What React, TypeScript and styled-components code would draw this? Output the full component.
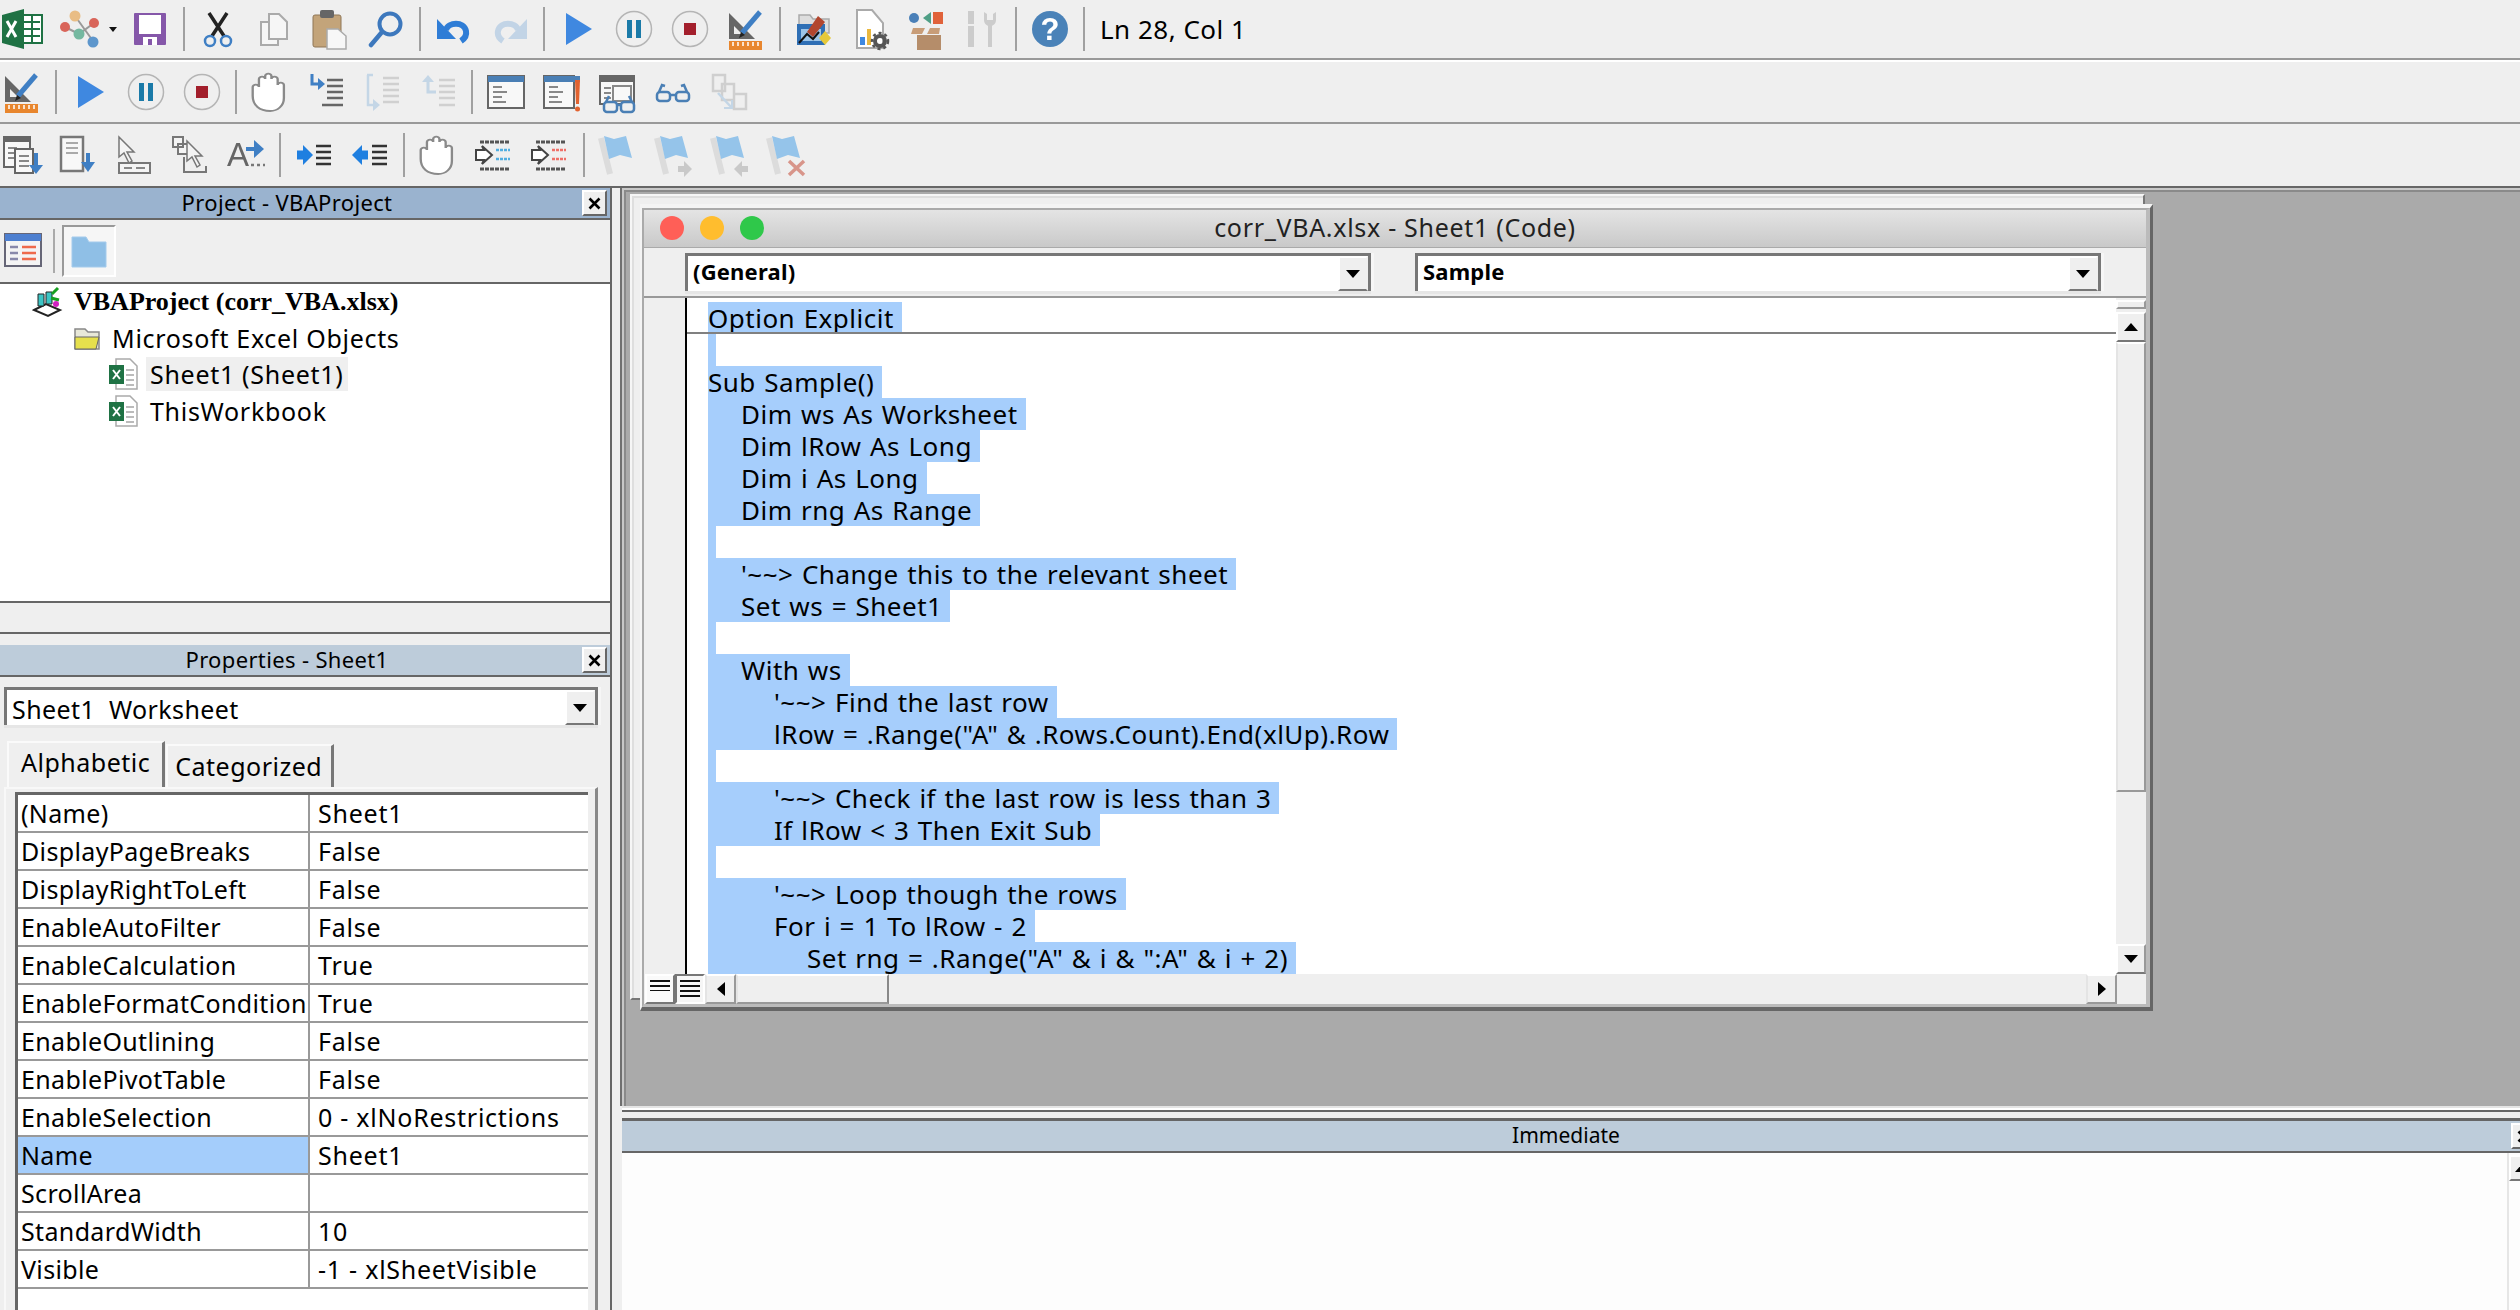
import type { ReactNode } from 'react';
import styled, { createGlobalStyle } from 'styled-components';

const UIFont = '"Noto Sans", "DejaVu Sans", sans-serif';

function FlagShape({ children }: { children?: ReactNode }) {
  return (
    <>
      <path d="M3 3l9 36" stroke="#dcdcdc" strokeWidth="6" />
      <path d="M6 1l10 3 12-3 6 22-12-3-11 4z" fill="#95c4ea" />
      {children}
    </>
  );
}

// all toolbar glyphs are drawn in a 40x40 box
const Glyphs: Record<string, ReactNode> = {
  excel: <>
    <rect x="20" y="6" width="20" height="28" fill="#fff" stroke="#1f7244" strokeWidth="2" />
    <path d="M22 13h16M22 20h16M22 27h16M30 6v28" stroke="#1f7244" strokeWidth="2" />
    <path d="M0 6 22 0v40L0 34z" fill="#1f7244" />
    <path d="M5 12l9 16M14 12 5 28" stroke="#fff" strokeWidth="3" />
  </>,
  multi: <>
    <path d="M15 7 33 32M34 14 19 25 5 18" stroke="#999" strokeWidth="2" fill="none" />
    <circle cx="15" cy="7" r="5.5" fill="#e9bd85" />
    <circle cx="5" cy="18" r="5" fill="#d9655a" />
    <circle cx="34" cy="14" r="5" fill="#d9655a" />
    <circle cx="19" cy="25" r="5.5" fill="#74b8a0" />
    <circle cx="33" cy="33" r="5.5" fill="#5d96cc" />
  </>,
  save: <>
    <rect x="4" y="4" width="32" height="32" rx="1" fill="#8557a9" />
    <rect x="9" y="6" width="22" height="19" fill="#fff" />
    <rect x="13" y="28" width="14" height="8" fill="#fff" />
    <rect x="18" y="30" width="4" height="6" fill="#8557a9" />
  </>,
  cut: <>
    <path d="M11 4 26 27M29 4 14 27" stroke="#222" strokeWidth="3.5" />
    <circle cx="12" cy="32" r="5" fill="none" stroke="#3f7fc4" strokeWidth="2.5" />
    <circle cx="28" cy="32" r="5" fill="none" stroke="#3f7fc4" strokeWidth="2.5" />
  </>,
  copy: <>
    <rect x="7" y="13" width="17" height="23" fill="#f6f6f6" stroke="#aaa" strokeWidth="2" />
    <path d="M15 5h10l8 8v17H15z" fill="#f6f6f6" stroke="#aaa" strokeWidth="2" />
  </>,
  paste: <>
    <rect x="3" y="6" width="28" height="32" rx="2" fill="#c3a47a" stroke="#8f7656" />
    <rect x="10" y="1" width="14" height="8" rx="2" fill="#666" />
    <path d="M17 20h11l8 7v13H17z" fill="#f7f7f7" stroke="#aaa" strokeWidth="1.5" />
  </>,
  find: <>
    <circle cx="24" cy="15" r="10.5" fill="none" stroke="#3d78bd" strokeWidth="4" />
    <path d="M16 23 5 36" stroke="#3d78bd" strokeWidth="4.5" strokeLinecap="round" />
  </>,
  undo: <>
    <path d="M12 21c2-8 18-9 20 1 1 5-2 8-5 10" fill="none" stroke="#2f7dd6" strokeWidth="6" />
    <path d="M3 10v20h19z" fill="#2f7dd6" />
  </>,
  redo: <>
    <path d="M28 21c-2-8-18-9-20 1-1 5 2 8 5 10" fill="none" stroke="#c2d4e6" strokeWidth="6" />
    <path d="M37 10v20H18z" fill="#c2d4e6" />
  </>,
  play: <path d="M8 4 34 20 8 36z" fill="#3f88e0" />,
  pause: <>
    <circle cx="20" cy="20" r="17.5" fill="none" stroke="#b5b5b5" strokeWidth="1.5" />
    <path d="M13 11h5v18h-5zM22 11h5v18h-5z" fill="#1a7aa8" />
  </>,
  stop: <>
    <circle cx="20" cy="20" r="17.5" fill="none" stroke="#b5b5b5" strokeWidth="1.5" />
    <rect x="14" y="14" width="12" height="12" fill="#a31f2c" />
  </>,
  design: <>
    <path d="M3 4v26h26z" fill="#666" />
    <path d="M8 17v8h8z" fill="#efefef" />
    <path d="M34 3 16 24" stroke="#3f7fc4" strokeWidth="5" />
    <path d="M13 29l2-6 4 3z" fill="#222" />
    <rect x="3" y="32" width="33" height="9" fill="#e8862e" />
    <path d="M7 33v4M12 33v4M17 33v4M22 33v4M27 33v4M32 33v4" stroke="#fff" strokeWidth="1.5" />
  </>,
  project: <>
    <path d="M5 6h11l3 4h16v14H5z" fill="#ddd" stroke="#aaa" strokeWidth="1.5" />
    <rect x="3" y="15" width="28" height="21" fill="#2f6fb5" />
    <path d="M7 20h20v12H7z" fill="#9cc4e8" />
    <path d="M24 7l7 6-12 15-6-5z" fill="#b2462e" />
    <path d="M31 22l6 7-6 7-6-7z" fill="#e6c93a" />
    <path d="M5 34l8-9 6 5 6-7" stroke="#111" strokeWidth="2" fill="none" />
  </>,
  properties: <>
    <path d="M7 1h15l11 13v25H7z" fill="#fff" stroke="#aaa" strokeWidth="2" />
    <path d="M10 28h5v8h-5z" fill="#3f88e0" />
    <path d="M17 20h4v16h-4z" fill="#e9b840" />
    <circle cx="30" cy="32" r="5" fill="none" stroke="#555" strokeWidth="4" />
    <circle cx="30" cy="32" r="8" fill="none" stroke="#555" strokeWidth="2.5" strokeDasharray="3 3" />
  </>,
  browser: <>
    <circle cx="8" cy="9" r="5" fill="#4a80b8" />
    <path d="M17 9l8-6v12z" fill="#4f9f86" />
    <rect x="27" y="3" width="10" height="12" fill="#e0623a" />
    <path d="M11 26h24v15H11z" fill="#b58d6a" />
    <path d="M7 19h12l-3 6H5zM24 19h10l-1 6H21z" fill="#c89d78" />
  </>,
  tools: <>
    <path d="M9 2v13M9 17v21" stroke="#ccc" strokeWidth="6" />
    <path d="M22 3v8c0 4 3 5 4 6v21h4V17c1-1 4-2 4-6V3l-3 2v6h-6V5z" fill="#ccc" />
  </>,
  help: <>
    <circle cx="20" cy="20" r="18" fill="#4a82b8" />
    <text x="20" y="31" textAnchor="middle" fontFamily="Liberation Sans" fontWeight="700" fontSize="31" fill="#fff">?</text>
  </>,
  hand: <path transform="translate(-9 0) scale(1.3 1)" d="M9 24v-9a2.4 2.4 0 0 1 4.8 0V7a2.4 2.4 0 0 1 4.8 0V4a2.4 2.4 0 0 1 4.8 0v3a2.4 2.4 0 0 1 4.8 0v6a2.4 2.4 0 0 1 4.8 0v13c0 8-5 13-10.5 13C14 39 9 33 9 24z" fill="#fff" stroke="#8a8a8a" strokeWidth="1.8" />,
  stepInto: <>
    <path d="M6 2v10h8" fill="none" stroke="#3f7fc4" strokeWidth="3" />
    <path d="M12 6l7 6-7 6z" fill="#3f7fc4" />
    <path d="M21 8h16M21 14h16M21 20h16M21 26h16M16 33h21" stroke="#666" strokeWidth="2.5" />
  </>,
  stepOver: <>
    <path d="M5 3h6M6 3v30h9" fill="none" stroke="#c4d6e6" strokeWidth="2.5" />
    <path d="M11 27l7 6-7 6z" fill="#c4d6e6" />
    <path d="M21 6h16M21 12h16M21 18h16M21 24h16M21 30h16" stroke="#d0d0d0" strokeWidth="2.5" />
  </>,
  stepOut: <>
    <path d="M10 8v12h8" fill="none" stroke="#c4d6e6" strokeWidth="3" />
    <path d="M4 10l6-7 6 7z" fill="#c4d6e6" />
    <path d="M21 8h16M21 14h16M21 20h16M21 26h16M21 33h16" stroke="#d0d0d0" strokeWidth="2.5" />
  </>,
  locals: <>
    <rect x="2" y="4" width="36" height="32" fill="#f8f8f8" stroke="#666" strokeWidth="2" />
    <rect x="2" y="4" width="36" height="6" fill="#4a7fb5" />
    <path d="M7 15h9M7 20h14M7 25h9M7 30h13" stroke="#888" strokeWidth="2" />
  </>,
  immediate: <>
    <rect x="2" y="4" width="30" height="32" fill="#f8f8f8" stroke="#666" strokeWidth="2" />
    <rect x="2" y="4" width="36" height="6" fill="#4a7fb5" />
    <path d="M7 15h9M7 20h14M7 25h9M7 30h13" stroke="#888" strokeWidth="2" />
    <path d="M33 8h5l-1 24h-3z" fill="#e2622f" />
    <circle cx="35.5" cy="37" r="2.5" fill="#e2622f" />
  </>,
  watch: <>
    <rect x="2" y="4" width="34" height="28" fill="#f8f8f8" stroke="#666" strokeWidth="2" />
    <rect x="2" y="4" width="34" height="6" fill="#666" />
    <path d="M6 16h7M6 21h7M6 26h7" stroke="#888" strokeWidth="2" />
    <rect x="15" y="14" width="18" height="15" fill="#f8f8f8" stroke="#888" strokeWidth="2" />
    <rect x="6" y="30" width="13" height="10" rx="3" fill="#f0f0f0" stroke="#4a7fb5" strokeWidth="2.5" />
    <rect x="23" y="30" width="13" height="10" rx="3" fill="#f0f0f0" stroke="#4a7fb5" strokeWidth="2.5" />
    <path d="M19 33h4M8 30l3-6M34 30l-3-6" stroke="#4a7fb5" strokeWidth="2.5" fill="none" />
  </>,
  glasses: <>
    <rect x="3" y="20" width="13" height="9" rx="3" fill="none" stroke="#4a7fb5" strokeWidth="2.5" />
    <rect x="22" y="20" width="13" height="9" rx="3" fill="none" stroke="#4a7fb5" strokeWidth="2.5" />
    <path d="M16 23h6M5 20l3-7 3 1M33 20l-3-7-3 1" stroke="#4a7fb5" strokeWidth="2.5" fill="none" />
  </>,
  stack: <>
    <path d="M3 3h12v16H3zM12 12h12v16H12zM24 22h12v15H24z" fill="none" stroke="#cfcfcf" strokeWidth="2.5" />
    <path d="M8 21l14 15" stroke="#c4d6e6" strokeWidth="2.5" />
    <path d="M22 28v8h-8" fill="none" stroke="#c4d6e6" strokeWidth="2" />
  </>,
  listMembers: <>
    <rect x="2" y="2" width="26" height="30" fill="#f8f8f8" stroke="#666" strokeWidth="2" />
    <rect x="2" y="2" width="26" height="5" fill="#666" />
    <path d="M6 13h9M6 18h6M6 23h6" stroke="#888" strokeWidth="2" />
    <rect x="13" y="14" width="18" height="24" fill="#f8f8f8" stroke="#666" strokeWidth="2" />
    <path d="M17 21h10M17 26h10M17 31h10" stroke="#888" strokeWidth="2" />
    <path d="M34 18v16" stroke="#3f7fc4" strokeWidth="4" />
    <path d="M27 30h14l-7 9z" fill="#3f7fc4" />
  </>,
  listConst: <>
    <path d="M3 2h22v34H3z" fill="#f8f8f8" stroke="#777" strokeWidth="2.5" />
    <path d="M8 8h12M8 13h12M8 18h12" stroke="#aaa" strokeWidth="2" />
    <path d="M30 18v14" stroke="#3f7fc4" strokeWidth="4" />
    <path d="M23 27h14l-7 10z" fill="#3f7fc4" />
  </>,
  quickInfo: <>
    <path d="M5 2v20l5-4 5 10 3-2-5-9h7z" fill="#f4f4f4" stroke="#777" strokeWidth="1.5" />
    <rect x="5" y="28" width="31" height="10" fill="#f4f4f4" stroke="#777" strokeWidth="2" />
    <path d="M10 33h8M22 33h9" stroke="#888" strokeWidth="2" />
  </>,
  paramInfo: <>
    <path d="M3 2h10v10H3zM8 9h10v10H8z" fill="#f4f4f4" stroke="#777" strokeWidth="2" />
    <path d="M17 6v20l5-4 5 10 3-2-5-9h7z" fill="#f4f4f4" stroke="#777" strokeWidth="1.5" />
    <path d="M14 22v15h22v-6" fill="none" stroke="#777" strokeWidth="2" />
  </>,
  complete: <>
    <text x="1" y="31" fontFamily="Liberation Sans" fontSize="33" fill="#666">A</text>
    <path d="M20 14h12" stroke="#3f7fc4" strokeWidth="4" />
    <path d="M28 5l10 9-10 9z" fill="#3f7fc4" />
    <path d="M25 30h3M31 30h3M37 30h2" stroke="#777" strokeWidth="2.5" />
  </>,
  indent: <>
    <path d="M3 20h8" stroke="#1e7fe0" strokeWidth="9" />
    <path d="M9 10l10 10-10 10z" fill="#1e7fe0" />
    <path d="M22 11h15M22 17h15M22 23h15M22 29h15" stroke="#333" strokeWidth="2.5" />
  </>,
  outdent: <>
    <path d="M10 20h8" stroke="#1e7fe0" strokeWidth="9" />
    <path d="M12 10 2 20l10 10z" fill="#1e7fe0" />
    <path d="M22 11h15M22 17h15M22 23h15M22 29h15" stroke="#333" strokeWidth="2.5" />
  </>,
  commentOn: <>
    <path d="M6 7h30M6 34h30" stroke="#555" strokeWidth="3" strokeDasharray="4 1" />
    <path d="M2 15h8l-2-4 10 9-10 9 2-4H2z" fill="#fff" stroke="#444" strokeWidth="2" />
    <path d="M22 15h14M22 24h14" stroke="#52aee0" strokeWidth="2.5" strokeDasharray="3 1" />
  </>,
  commentOff: <>
    <path d="M6 7h30M6 34h30" stroke="#555" strokeWidth="3" strokeDasharray="4 1" />
    <path d="M2 15h8l-2-4 10 9-10 9 2-4H2z" fill="#fff" stroke="#444" strokeWidth="2" />
    <path d="M22 15h14M22 24h14" stroke="#ee7068" strokeWidth="2.5" strokeDasharray="3 1" />
  </>,
  flag: <FlagShape />,
  flagNext: <FlagShape><path d="M24 31h6v-5l8 8-8 8v-5h-6z" fill="#c9c9c9" /></FlagShape>,
  flagPrev: <FlagShape><path d="M38 31h-6v-5l-8 8 8 8v-5h6z" fill="#c9c9c9" /></FlagShape>,
  flagClear: <FlagShape><path d="M23 26l15 14M38 26 23 40" stroke="#d8958a" strokeWidth="3.5" /></FlagShape>,
};

type ToolItem = string | '|';

const rowOne: ToolItem[] = ['save', '|', 'cut', 'copy', 'paste', 'find', '|', 'undo', 'redo', '|', 'play', 'pause', 'stop', 'design', '|', 'project', 'properties', 'browser', 'tools', '|', 'help', '|'];
const rowTwo: ToolItem[] = ['design', '|', 'play', 'pause', 'stop', '|', 'hand', 'stepInto', 'stepOver', 'stepOut', '|', 'locals', 'immediate', 'watch', 'glasses', 'stack'];
const rowThree: ToolItem[] = ['listMembers', 'listConst', 'quickInfo', 'paramInfo', 'complete', '|', 'indent', 'outdent', '|', 'hand', 'commentOn', 'commentOff', '|', 'flag', 'flagNext', 'flagPrev', 'flagClear'];

const codeLines: { text: string; level?: number }[] = [
  { text: 'Option Explicit' },
  { text: '' },
  { text: 'Sub Sample()' },
  { text: 'Dim ws As Worksheet', level: 1 },
  { text: 'Dim lRow As Long', level: 1 },
  { text: 'Dim i As Long', level: 1 },
  { text: 'Dim rng As Range', level: 1 },
  { text: '' },
  { text: "'~~> Change this to the relevant sheet", level: 1 },
  { text: 'Set ws = Sheet1', level: 1 },
  { text: '' },
  { text: 'With ws', level: 1 },
  { text: "'~~> Find the last row", level: 2 },
  { text: 'lRow = .Range("A" & .Rows.Count).End(xlUp).Row', level: 2 },
  { text: '' },
  { text: "'~~> Check if the last row is less than 3", level: 2 },
  { text: 'If lRow < 3 Then Exit Sub', level: 2 },
  { text: '' },
  { text: "'~~> Loop though the rows", level: 2 },
  { text: 'For i = 1 To lRow - 2', level: 2 },
  { text: 'Set rng = .Range("A" & i & ":A" & i + 2)', level: 3 },
];

const propertyRows = [
  ['(Name)', 'Sheet1'],
  ['DisplayPageBreaks', 'False'],
  ['DisplayRightToLeft', 'False'],
  ['EnableAutoFilter', 'False'],
  ['EnableCalculation', 'True'],
  ['EnableFormatCondition', 'True'],
  ['EnableOutlining', 'False'],
  ['EnablePivotTable', 'False'],
  ['EnableSelection', '0 - xlNoRestrictions'],
  ['Name', 'Sheet1'],
  ['ScrollArea', ''],
  ['StandardWidth', '10'],
  ['Visible', '-1 - xlSheetVisible'],
];

function Glyph({ name }: { name: string }) {
  return <IconSvg viewBox="0 0 40 40">{Glyphs[name]}</IconSvg>;
}

function ToolRowItems({ items }: { items: ToolItem[] }) {
  return (
    <>
      {items.map((item, index) =>
        item === '|'
          ? <ToolSep key={index} />
          : <ToolSlot key={index}><Glyph name={item} /></ToolSlot>
      )}
    </>
  );
}

function SheetIcon() {
  return (
    <TreeSvg width="30" height="32" viewBox="0 0 30 32">
      <path d="M8 1h14l7 7v23H8z" fill="#fff" stroke="#aaa" strokeWidth="1.5" />
      <path d="M18 12h8M18 17h8M18 22h8M18 27h8" stroke="#bbb" strokeWidth="2" />
      <rect x="1" y="7" width="15" height="19" fill="#1f7244" />
      <path d="M5 12l7 9M12 12l-7 9" stroke="#fff" strokeWidth="2" />
    </TreeSvg>
  );
}

function CloseMark() {
  return (
    <svg width="13" height="13" viewBox="0 0 13 13">
      <path d="M1.5 1.5l10 10M11.5 1.5l-10 10" stroke="#000" strokeWidth="2.6" />
    </svg>
  );
}

function ComboBox({ children, bold, width }: { children: ReactNode; bold?: boolean; width: number }) {
  return (
    <Combo $width={width}>
      <ComboText $bold={bold}>{children}</ComboText>
      <ComboButton><Arrow $dir="down" /></ComboButton>
    </Combo>
  );
}

export default function App() {
  return (
    <Page>
      <GlobalStyle />

      <Toolbars>
        <ToolRow $height={58} $line="#999" $gap={2}>
          <ExcelSlot><Glyph name="excel" /></ExcelSlot>
          <MultiSlot><Glyph name="multi" /><Caret /></MultiSlot>
          <ToolRowItems items={rowOne} />
          <Status>Ln 28, Col 1</Status>
        </ToolRow>
        <ToolRow $height={60} $line="#999" $gap={0} $shift>
          <ToolRowItems items={rowTwo} />
        </ToolRow>
        <ToolRow $height={62} $line="#666" $gap={0} $shift>
          <ToolRowItems items={rowThree} />
        </ToolRow>
      </Toolbars>

      <Workspace>
        <LeftColumn>
          <DockTitle $active>
            <TitleText>Project - VBAProject</TitleText>
            <CloseButton><CloseMark /></CloseButton>
          </DockTitle>
          <ProjectTools>
            <ViewCodeButton>
              <IconSvg viewBox="0 0 40 40">
                <rect x="2" y="3" width="36" height="32" fill="#f4f4f4" stroke="#667" strokeWidth="2" />
                <rect x="2" y="3" width="36" height="7" fill="#4d7fd0" />
                <path d="M7 16h8M7 22h8M7 28h8" stroke="#88a" strokeWidth="2.5" />
                <path d="M19 16h14M19 22h14M19 28h14" stroke="#ee6a4c" strokeWidth="2.5" />
              </IconSvg>
            </ViewCodeButton>
            <ToolLine />
            <FolderButton>
              <IconSvg viewBox="0 0 40 40">
                <path d="M3 6h14l3 5h17v25H3z" fill="#8fbfe6" stroke="#a4cbec" />
              </IconSvg>
            </FolderButton>
          </ProjectTools>
          <TreePane>
            <TreeRow $indent={32} $bold>
              <TreeSvg width="32" height="32" viewBox="0 0 32 32">
                <path d="M2 24l12-6 14 6-12 6z" fill="#fff" stroke="#222" strokeWidth="2" />
                <path d="M6 8h6v12H6zM14 6h6v12h-6z" fill="#3cc4c4" stroke="#222" />
                <path d="M20 8l6-6M19 12l8 2" stroke="#18a020" strokeWidth="3" />
                <circle cx="24" cy="18" r="3" fill="#d020c0" />
              </TreeSvg>
              VBAProject (corr_VBA.xlsx)
            </TreeRow>
            <TreeRow $indent={72}>
              <TreeSvg width="30" height="26" viewBox="0 0 30 26">
                <path d="M3 4h10l3 3h11v17H3z" fill="#e8e8d8" stroke="#888" strokeWidth="1.5" />
                <path d="M3 12h24l-3 12H3z" fill="#e6e04c" stroke="#666" />
              </TreeSvg>
              Microsoft Excel Objects
            </TreeRow>
            <TreeRow $indent={108}>
              <SheetIcon />
              <TreeLabel $selected>Sheet1 (Sheet1)</TreeLabel>
            </TreeRow>
            <TreeRow $indent={108}>
              <SheetIcon />
              <TreeLabel>ThisWorkbook</TreeLabel>
            </TreeRow>
          </TreePane>
          <PaneGap />

          <DockTitle>
            <TitleText>Properties - Sheet1</TitleText>
            <CloseButton><CloseMark /></CloseButton>
          </DockTitle>
          <PropertiesBody>
            <ComboBox width={594}>Sheet1&nbsp;&nbsp;Worksheet</ComboBox>
            <Tabs>
              <Tab $active>Alphabetic</Tab>
              <Tab>Categorized</Tab>
            </Tabs>
            <TabPanel>
              <PropTable>
                {propertyRows.map(([name, value]) => (
                  <PropRow key={name}>
                    <PropName $selected={name === 'Name'}>{name}</PropName>
                    <PropValue>{value}</PropValue>
                  </PropRow>
                ))}
              </PropTable>
            </TabPanel>
          </PropertiesBody>
        </LeftColumn>

        <RightColumn>
          <MdiArea>
            <BackWindow />
            <CodeWindow>
              <WindowFrame>
                <WindowTitle>
                  <Traffic>
                    <Light $color="#ff5f57" />
                    <Light $color="#ffbd2e" />
                    <Light $color="#2fc84a" />
                  </Traffic>
                  <WindowName>corr_VBA.xlsx - Sheet1 (Code)</WindowName>
                </WindowTitle>
                <ComboRow>
                  <ComboBox bold width={686}>(General)</ComboBox>
                  <ComboBox bold width={686}>Sample</ComboBox>
                </ComboRow>
                <CodeBody>
                  <Gutter />
                  <CodePane>
                    {codeLines.map((line, index) => (
                      <CodeRow key={index} $divider={index === 0}>
                        <CodeText $level={line.level ?? 0}>{line.text}</CodeText>
                      </CodeRow>
                    ))}
                  </CodePane>
                  <VScroll>
                    <ScrollStub />
                    <ScrollButton $height={30}><Arrow $dir="up" /></ScrollButton>
                    <ScrollThumb />
                    <ScrollButton $height={30}><Arrow $dir="down" /></ScrollButton>
                  </VScroll>
                </CodeBody>
                <HScrollRow>
                  <ViewToggle>
                    <ToggleLines $wide={false} />
                  </ViewToggle>
                  <ViewToggle $pressed>
                    <ToggleLines $wide />
                  </ViewToggle>
                  <HScrollButton><Arrow $dir="left" /></HScrollButton>
                  <HThumb />
                  <HScrollSpace />
                  <HScrollButton><Arrow $dir="right" /></HScrollButton>
                </HScrollRow>
              </WindowFrame>
            </CodeWindow>
          </MdiArea>
          <ImmediateDock>
            <DockSash />
            <DockTitle>
              <ImmediateTitle>Immediate</ImmediateTitle>
              <ImmediateClose><CloseMark /></ImmediateClose>
            </DockTitle>
            <ImmediateBody>
              <ImmediateText />
              <ImmediateScroll>
                <ScrollButton $height={26}><Arrow $dir="up" /></ScrollButton>
              </ImmediateScroll>
            </ImmediateBody>
          </ImmediateDock>
        </RightColumn>
      </Workspace>
    </Page>
  );
}

const GlobalStyle = createGlobalStyle`
  html, body {
    margin: 0;
    padding: 0;
    background: #efefef;
  }
`

const Page = styled.div`
  width: 2520px;
  height: 1310px;
  overflow: hidden;
  display: flex;
  flex-direction: column;
  background: #efefef;
  font-family: ${UIFont};
  color: #000;
`

const Toolbars = styled.div`
  flex: none;
`

const ToolRow = styled.div<{ $height: number; $line: string; $gap: number; $shift?: boolean }>`
  height: ${props => props.$height}px;
  display: flex;
  align-items: center;
  border-bottom: 2px solid ${props => props.$line};
  margin-bottom: ${props => props.$gap}px;
  box-shadow: 0 ${props => props.$gap}px 0 #fff;

  & > :first-child {
    margin-left: ${props => props.$shift ? '-6px' : '0'};
  }
`

const ToolSlot = styled.div`
  flex: none;
  width: 56px;
  display: flex;
  justify-content: center;
`

const ExcelSlot = styled.div`
  flex: none;
  width: 44px;
  display: flex;
  justify-content: center;
`

const MultiSlot = styled.div`
  flex: none;
  width: 78px;
  display: flex;
  align-items: center;
  padding-left: 16px;
  box-sizing: border-box;
`

const Caret = styled.span`
  margin-left: 9px;
  border-left: 4px solid transparent;
  border-right: 4px solid transparent;
  border-top: 5px solid #111;
`

const ToolSep = styled.div`
  flex: none;
  width: 12px;
  display: flex;
  justify-content: center;

  &::before {
    content: '';
    width: 2px;
    height: 44px;
    background: #a0a0a0;
  }
`

const IconSvg = styled.svg`
  display: block;
  width: 40px;
  height: 40px;
  overflow: visible;
  filter: blur(0.5px);
`

const Status = styled.div`
  margin-left: 10px;
  font-size: 26px;
  letter-spacing: 0.5px;
`

const Workspace = styled.div`
  flex: 1;
  min-height: 0;
  display: flex;
`

const LeftColumn = styled.div`
  flex: none;
  width: 610px;
  display: flex;
  flex-direction: column;
  border-right: 2px solid #666;
`

const DockTitle = styled.div<{ $active?: boolean }>`
  position: relative;
  flex: none;
  height: 30px;
  display: flex;
  align-items: center;
  justify-content: center;
  background: ${props => props.$active ? '#9ab3cf' : '#bdccda'};
  border-bottom: 2px solid #666;
`

const TitleText = styled.span`
  font-size: 22px;
  line-height: 28px;
  letter-spacing: 0.35px;
  padding-right: 36px;
  padding-bottom: 2px;
`

const ImmediateTitle = styled(TitleText)`
  font-size: 21px;
  letter-spacing: 0;
  padding-right: 10px;
`

const CloseButton = styled.div`
  position: absolute;
  top: 2px;
  right: 3px;
  width: 25px;
  height: 26px;
  box-sizing: border-box;
  display: flex;
  align-items: center;
  justify-content: center;
  background: #efefef;
  border: 2px solid;
  border-color: #fff #666 #666 #fff;
`

const ImmediateClose = styled(CloseButton)`
  right: -16px;
`

const ProjectTools = styled.div`
  flex: none;
  height: 62px;
  display: flex;
  align-items: center;
  padding-left: 3px;
  border-bottom: 2px solid #666;
`

const ViewCodeButton = styled.div`
  flex: none;
  width: 40px;
`

const ToolLine = styled.div`
  flex: none;
  width: 2px;
  height: 44px;
  margin: 0 7px 0 10px;
  background: #aaa;
`

const FolderButton = styled.div`
  flex: none;
  width: 54px;
  height: 52px;
  box-sizing: border-box;
  display: flex;
  align-items: center;
  justify-content: center;
  background: #f6f6f6;
  border: 2px solid;
  border-color: #999 #fff #fff #999;
`

const TreePane = styled.div`
  flex: none;
  height: 319px;
  box-sizing: border-box;
  background: #fff;
  border-bottom: 2px solid #666;
`

const TreeRow = styled.div<{ $indent: number; $bold?: boolean }>`
  height: 36.2px;
  display: flex;
  align-items: center;
  gap: 10px;
  padding-left: ${props => props.$indent}px;
  font-size: ${props => props.$bold ? '26px' : '25px'};
  font-family: ${props => props.$bold ? '"Liberation Serif", serif' : UIFont};
  font-weight: ${props => props.$bold ? 700 : 400};
  letter-spacing: ${props => props.$bold ? '0' : '0.7px'};
`

const TreeSvg = styled.svg`
  flex: none;
  display: block;
  filter: blur(0.4px);
`

const TreeLabel = styled.span<{ $selected?: boolean }>`
  padding: 0 5px 0 4px;
  margin-left: -2px;
  background: ${props => props.$selected ? '#efefef' : 'transparent'};
`

const PaneGap = styled.div`
  flex: none;
  height: 29px;
  border-bottom: 2px solid #666;
  margin-bottom: 11px;
`

const PropertiesBody = styled.div`
  flex: 1;
  min-height: 0;
  padding: 10px 0 0 4px;
  box-sizing: border-box;
`

const Combo = styled.div<{ $width: number }>`
  flex: none;
  width: ${props => props.$width}px;
  height: 38px;
  box-sizing: border-box;
  display: flex;
  background: #fff;
  border: solid #777;
  border-width: 3px 3px 0 3px;
  box-shadow: 0 3px 0 #e6e6e6, 3px 0 0 #f6f6f6;
`

const ComboText = styled.div<{ $bold?: boolean }>`
  flex: 1;
  padding-left: 5px;
  font-size: ${props => props.$bold ? '22px' : '25px'};
  font-weight: ${props => props.$bold ? 700 : 400};
  line-height: ${props => props.$bold ? '31px' : '38px'};
  letter-spacing: ${props => props.$bold ? '0.2px' : '0.4px'};
  white-space: nowrap;
`

const ComboButton = styled.div`
  flex: none;
  width: 30px;
  box-sizing: border-box;
  display: flex;
  align-items: center;
  justify-content: center;
  background: #efefef;
  border: 2px solid;
  border-color: #fff #efefef #777 #fff;
`

const Arrow = styled.span<{ $dir: 'up' | 'down' | 'left' | 'right' }>`
  width: 0;
  height: 0;
  border-style: solid;
  border-color: transparent;
  ${props => props.$dir === 'down' && 'border-width: 8px 7px 0 7px; border-top-color: #000;'}
  ${props => props.$dir === 'up' && 'border-width: 0 7px 8px 7px; border-bottom-color: #000;'}
  ${props => props.$dir === 'left' && 'border-width: 7px 8px 7px 0; border-right-color: #000;'}
  ${props => props.$dir === 'right' && 'border-width: 7px 0 7px 8px; border-left-color: #000;'}
`

const Tabs = styled.div`
  height: 46px;
  margin-top: 16px;
  display: flex;
  align-items: flex-end;
  padding-left: 3px;
`

const Tab = styled.div<{ $active?: boolean }>`
  height: ${props => props.$active ? '46px' : '43px'};
  box-sizing: border-box;
  padding: ${props => props.$active ? '0 12px 7px' : '0 9px 2px 7px'};
  display: flex;
  align-items: center;
  font-size: 25px;
  letter-spacing: 0.5px;
  margin-right: ${props => props.$active ? '1px' : '0'};
  border-top: 2px solid #fafafa;
  border-left: 2px solid #fafafa;
  border-right: 3px solid #777;
`

const TabPanel = styled.div`
  width: 594px;
  height: 600px;
  box-sizing: border-box;
  padding: 3px 8px 0 9px;
  border-top: 2px solid #f8f8f8;
  border-left: 2px solid #f8f8f8;
  border-right: 3px solid #888;
`

const PropTable = styled.div`
  height: 600px;
  width: 573px;
  box-sizing: border-box;
  background: #fff;
  border-top: 3px solid #666;
  border-left: 3px solid #666;
`

const PropRow = styled.div`
  height: 38px;
  box-sizing: border-box;
  display: flex;
  border-bottom: 2px solid #999;
  font-size: 25px;
  line-height: 36px;
`

const PropName = styled.div<{ $selected?: boolean }>`
  flex: none;
  width: 292px;
  box-sizing: border-box;
  padding-left: 3px;
  overflow: hidden;
  white-space: nowrap;
  letter-spacing: 0.35px;
  background: ${props => props.$selected ? '#a4cdfb' : 'transparent'};
  border-right: 2px solid #999;
`

const PropValue = styled.div`
  flex: 1;
  padding-left: 8px;
  white-space: nowrap;
  letter-spacing: 0.75px;
`

const RightColumn = styled.div`
  flex: 1;
  min-width: 0;
  margin-left: 8px;
  display: flex;
  flex-direction: column;
`

const MdiArea = styled.div`
  position: relative;
  flex: 1;
  min-height: 0;
  overflow: hidden;
  background: #aaa;
  border-left: 2px solid #707070;
  box-shadow: inset 2px 2px 0 #c8c8c8, inset 4px 4px 0 #8a8a8a;
`

const BackWindow = styled.div`
  position: absolute;
  left: 8px;
  top: 6px;
  width: 1515px;
  height: 806px;
  box-sizing: border-box;
  background: #efefef;
  border: 2px solid;
  border-color: #f6f6f6 #777 #777 #f6f6f6;
  box-shadow: inset 2px 2px 0 #dedede;
`

const CodeWindow = styled.div`
  position: absolute;
  left: 18px;
  top: 16px;
  width: 1513px;
  height: 807px;
  box-sizing: border-box;
  background: #efefef;
  border-style: solid;
  border-width: 4px 3px 4px 2px;
  border-color: #f4f4f4 #666 #666 #f4f4f4;
`

const WindowFrame = styled.div`
  height: 100%;
  box-sizing: border-box;
  display: flex;
  flex-direction: column;
  border-style: solid;
  border-width: 2px 4px 3px 2px;
  border-color: #aaa #bbb #bbb #aaa;
`

const WindowTitle = styled.div`
  position: relative;
  flex: none;
  height: 37px;
  display: flex;
  align-items: center;
  justify-content: center;
  background: linear-gradient(#e4e4e4, #c9c9c9);
  border-bottom: 1px solid #aaa;
`

const Traffic = styled.div`
  position: absolute;
  left: 16px;
  top: 6px;
  display: flex;
  gap: 16px;
`

const Light = styled.span<{ $color: string }>`
  width: 24px;
  height: 24px;
  border-radius: 50%;
  background: ${props => props.$color};
`

const WindowName = styled.div`
  font-size: 25px;
  letter-spacing: 0.7px;
  line-height: 34px;
  padding-bottom: 3px;
  color: #222;
`

const ComboRow = styled.div`
  flex: none;
  height: 50px;
  box-sizing: border-box;
  padding: 5px 0 0 41px;
  display: flex;
  gap: 44px;
  border-bottom: 2px solid #999;
`

const CodeBody = styled.div`
  flex: 1;
  min-height: 0;
  display: flex;
`

const Gutter = styled.div`
  flex: none;
  width: 41px;
  background: #efefef;
  border-right: 2px solid #000;
`

const CodePane = styled.div`
  flex: 1;
  min-width: 0;
  background: #fff;
  padding: 4px 0 0 21px;
  overflow: hidden;
`

const CodeRow = styled.div<{ $divider: boolean }>`
  position: relative;
  height: 32px;

  ${props => props.$divider && `
    &::after {
      content: '';
      position: absolute;
      left: -21px;
      right: 0;
      top: 30px;
      height: 2px;
      background: #808080;
    }
  `}
`

const CodeText = styled.div<{ $level: number }>`
  display: inline-block;
  min-width: 8px;
  height: 32px;
  box-sizing: ${props => props.$level ? 'content-box' : 'border-box'};
  padding: 0 8px 0 ${props => props.$level * 33}px;
  background: #a6cefc;
  font-size: 26px;
  letter-spacing: 0.5px;
  word-spacing: 1.2px;
  line-height: 32px;
  white-space: pre;
  vertical-align: top;
`

const VScroll = styled.div`
  flex: none;
  width: 30px;
  display: flex;
  flex-direction: column;
  background: #efefef;
`

const ScrollStub = styled.div`
  flex: none;
  height: 9px;
  margin-top: 2px;
  margin-bottom: 3px;
  box-sizing: border-box;
  border: 2px solid;
  border-color: #fff #999 #999 #fff;
`

const ScrollButton = styled.div<{ $height: number }>`
  flex: none;
  height: ${props => props.$height}px;
  box-sizing: border-box;
  display: flex;
  align-items: center;
  justify-content: center;
  background: #efefef;
  border: 2px solid;
  border-color: #fff #999 #777 #fff;
`

const ScrollThumb = styled.div`
  flex: 1;
  margin-bottom: 152px;
  box-sizing: border-box;
  background: #efefef;
  border: 2px solid;
  border-color: #fff #999 #999 #e4e4e4;
`

const HScrollRow = styled.div`
  flex: none;
  height: 30px;
  display: flex;
  padding: 0 29px 0 1px;
`

const ViewToggle = styled.div<{ $pressed?: boolean }>`
  flex: none;
  width: 30px;
  box-sizing: border-box;
  display: flex;
  align-items: flex-start;
  justify-content: center;
  padding-top: 4px;
  background: ${props => props.$pressed ? '#f6f6f6' : '#fafafa'};
  border: 2px solid;
  border-color: ${props => props.$pressed ? '#777 #fff #fff #777' : '#fff #777 #777 #fff'};
`

const ToggleLines = styled.span<{ $wide: boolean }>`
  width: 20px;
  height: ${props => props.$wide ? '20px' : '11px'};
  background: repeating-linear-gradient(#111 0 2px, transparent 2px 5px);
`

const HScrollButton = styled.div`
  flex: none;
  width: 31px;
  box-sizing: border-box;
  display: flex;
  align-items: center;
  justify-content: center;
  border: 2px solid;
  border-color: #fff #999 #999 #e4e4e4;
`

const HThumb = styled.div`
  flex: none;
  width: 153px;
  box-sizing: border-box;
  border: 2px solid;
  border-color: #fff #888 #999 #e4e4e4;
`

const HScrollSpace = styled.div`
  flex: 1;
`

const ImmediateDock = styled.div`
  flex: none;
  height: 204px;
  margin-left: 2px;
  display: flex;
  flex-direction: column;
  background: #fff;
`

const DockSash = styled.div`
  flex: none;
  height: 15px;
  box-sizing: border-box;
  background: linear-gradient(#e4e4e4 0 2px, #fff 2px 4px, #666 4px 6px, #efefef 6px);
  border-bottom: 3px solid #666;
`

const ImmediateBody = styled.div`
  flex: 1;
  min-height: 0;
  display: flex;
  background: #fdfdfd;
`

const ImmediateText = styled.div`
  flex: 1;
`

const ImmediateScroll = styled.div`
  flex: none;
  width: 26px;
  margin-right: -15px;
  padding-top: 2px;
  border-left: 2px solid #e6e6e6;
`
